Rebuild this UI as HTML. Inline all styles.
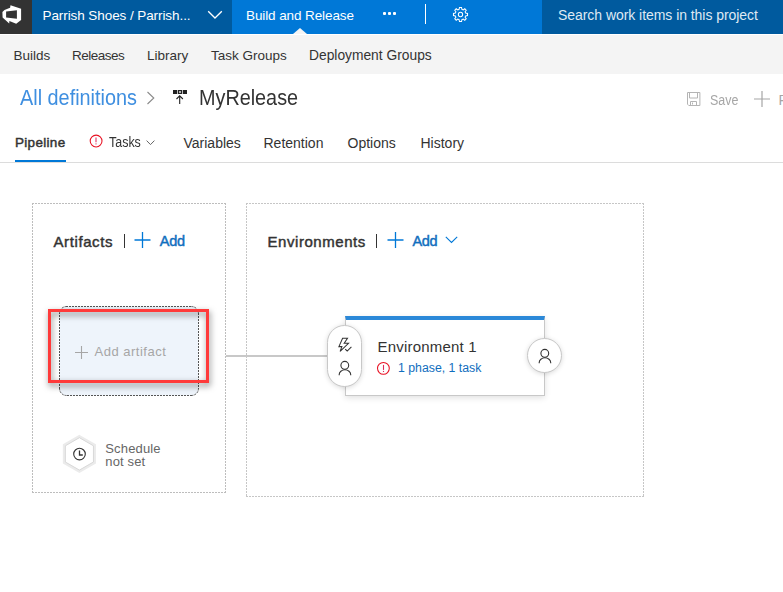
<!DOCTYPE html>
<html><head><meta charset="utf-8">
<style>
*{margin:0;padding:0;box-sizing:border-box}
html,body{width:783px;height:592px;overflow:hidden;background:#fff;font-family:"Liberation Sans",sans-serif;color:#333;position:relative}
.abs{position:absolute;white-space:nowrap;line-height:1}
svg{position:absolute;overflow:visible}
#top{position:absolute;left:0;top:0;width:783px;height:34px;background:#0078d7}
#logo{position:absolute;left:0;top:0;width:32px;height:34px;background:#333}
#proj{position:absolute;left:32px;top:0;width:200px;height:34px;background:#005a9e}
#search{position:absolute;left:542px;top:0;width:241px;height:34px;background:#005a9e}
.wt{color:#fff;font-size:13.5px}
#sub{position:absolute;left:0;top:34px;width:783px;height:40px;background:#f4f4f4;border-top:1px solid #fff}
.sb{font-size:13.5px;color:#333;top:48.5px}
.tab{font-size:14px;color:#333;top:135.7px}
.sm{font-weight:normal !important;-webkit-text-stroke:0.45px currentColor}
</style></head>
<body>
<div id="top"></div>
<div id="logo"></div>
<div id="proj"></div>
<div id="search"></div>
<svg style="left:0;top:0" width="32" height="34" viewBox="0 0 32 34">
  <path fill="#fff" fill-rule="evenodd" d="M10.5 5.3 L21.1 8.8 L21.1 20 L16.2 23.7 L9.4 21 L9.2 23.5 L2.6 17.6 L2.4 11.9 L4.5 9.9 L10.1 7.7 Z M6.1 11.4 L16.9 10.3 L16.9 18.7 L6.1 17.4 Z"/>
</svg>
<div class="abs wt" style="left:42.5px;top:9.1px;letter-spacing:-0.08px">Parrish Shoes / Parrish...</div>
<svg style="left:207px;top:10px" width="16" height="10" viewBox="0 0 16 10"><path d="M1.2 1.2 L8 8 L14.8 1.2" fill="none" stroke="#fff" stroke-width="1.3"/></svg>
<div class="abs wt" style="left:246px;top:9.1px;letter-spacing:-0.1px">Build and Release</div>
<svg style="left:293px;top:28px" width="14" height="6" viewBox="0 0 14 6"><path d="M0 6 L7 0 L14 6 Z" fill="#f4f4f4"/></svg>
<div class="abs" style="left:382.7px;top:12px;width:3px;height:3px;border-radius:1px;background:#fff"></div>
<div class="abs" style="left:387.9px;top:12px;width:3px;height:3px;border-radius:1px;background:#fff"></div>
<div class="abs" style="left:393.1px;top:12px;width:3px;height:3px;border-radius:1px;background:#fff"></div>
<div class="abs" style="left:425px;top:4px;width:1px;height:20px;background:#fff"></div>
<svg style="left:453.4px;top:6.6px" width="15" height="15" viewBox="0 0 16 16">
  <path fill="none" stroke="#fff" stroke-width="1.1" d="M6.9 1 L9.1 1 L9.5 3 L10.9 3.6 L12.6 2.4 L14.1 3.9 L12.9 5.6 L13.5 7 L15.5 7.4 L15.5 9.6 L13.5 10 L12.9 11.4 L14.1 13.1 L12.6 14.6 L10.9 13.4 L9.5 14 L9.1 16 L6.9 16 L6.5 14 L5.1 13.4 L3.4 14.6 L1.9 13.1 L3.1 11.4 L2.5 10 L0.5 9.6 L0.5 7.4 L2.5 7 L3.1 5.6 L1.9 3.9 L3.4 2.4 L5.1 3.6 L6.5 3 Z" transform="translate(0,-0.5)"/>
  <circle cx="8" cy="8" r="2.3" fill="none" stroke="#fff" stroke-width="1.1"/>
</svg>
<div class="abs wt" style="left:558px;top:8px;font-size:14px;color:#dfe9f3;letter-spacing:-0.05px">Search work items in this project</div>

<div id="sub"></div>
<div class="abs sb" style="left:13.5px">Builds</div>
<div class="abs sb" style="left:72px;letter-spacing:-0.5px">Releases</div>
<div class="abs sb" style="left:147px">Library</div>
<div class="abs sb" style="left:211px;letter-spacing:0px">Task Groups</div>
<div class="abs sb" style="left:309px;font-size:13.8px">Deployment Groups</div>

<div class="abs" style="left:20px;top:86.8px;font-size:22px;color:#3f8fe0;letter-spacing:0px;transform-origin:0 0;transform:scaleX(0.902)">All definitions</div>
<svg style="left:146px;top:91px" width="10" height="14" viewBox="0 0 10 14"><path d="M1.5 1 L7.8 7 L1.5 13" fill="none" stroke="#8a8a8a" stroke-width="1.1"/></svg>
<svg style="left:172px;top:89px" width="17" height="16" viewBox="0 0 17 16">
  <rect x="1" y="1" width="4.2" height="4" fill="#222"/>
  <rect x="5.9" y="1" width="4.2" height="4" fill="#222"/>
  <rect x="10.8" y="1" width="4.2" height="4" fill="#222"/>
  <rect x="7.2" y="2.2" width="1.6" height="1.6" fill="#fff"/>
  <path d="M7.7 6.8 L7.7 15 M4.5 10 L7.7 6.8 L10.9 10" fill="none" stroke="#222" stroke-width="1.1"/>
</svg>
<div class="abs" style="left:199px;top:87px;font-size:22px;color:#333;letter-spacing:0px;transform-origin:0 0;transform:scaleX(0.9)">MyRelease</div>

<svg style="left:686px;top:92px" width="15" height="15" viewBox="0 0 15 15">
  <path d="M1.5 0.5 H13.9 V13.5 H2.8 L1.5 12.2 Z" fill="none" stroke="#b4b4b4" stroke-width="1"/>
  <path d="M3.5 0.5 V6 H11.5 V0.5" fill="none" stroke="#b4b4b4" stroke-width="1"/>
  <path d="M4.5 13.5 V9.5 H10.5 V13.5 M6.5 10.5 V12.5" fill="none" stroke="#b4b4b4" stroke-width="1"/>
</svg>
<div class="abs" style="left:709.8px;top:93px;font-size:14px;color:#a6a6a6;transform-origin:0 0;transform:scaleX(0.89)">Save</div>
<svg style="left:754px;top:91px" width="16" height="16" viewBox="0 0 16 16"><path d="M8 0 V16 M0 8 H16" stroke="#a6a6a6" stroke-width="1.2"/></svg>
<div class="abs" style="left:778.5px;top:93px;font-size:14px;color:#a6a6a6">R</div>

<div class="abs tab sm" style="left:15px;font-weight:bold;font-size:13.5px;top:136.3px;letter-spacing:0.3px">Pipeline</div>
<div class="abs" style="left:15px;top:160px;width:51px;height:2px;background:#0078d7"></div>
<svg style="left:89px;top:133.5px" width="14" height="14" viewBox="0 0 14 14"><circle cx="7.1" cy="7" r="5.9" fill="none" stroke="#e81123" stroke-width="1.05"/><path d="M7 3.6 V8.3" stroke="#e02a5a" stroke-width="1.05"/><rect x="6.45" y="9.4" width="1.1" height="1" fill="#e02a5a"/></svg>
<div class="abs tab" style="left:108.5px;top:134.6px;font-size:14px;letter-spacing:0px;transform-origin:0 0;transform:scaleX(0.89)">Tasks</div>
<svg style="left:146px;top:140px" width="9" height="6" viewBox="0 0 9 6"><path d="M0.6 0.6 L4.5 4.6 L8.4 0.6" fill="none" stroke="#666" stroke-width="1"/></svg>
<div class="abs tab" style="left:183.5px">Variables</div>
<div class="abs tab" style="left:263.5px">Retention</div>
<div class="abs tab" style="left:347.5px">Options</div>
<div class="abs tab" style="left:420.5px">History</div>
<div class="abs" style="left:0;top:162px;width:783px;height:1px;background:#dcdcdc"></div>

<!-- panels -->
<div class="abs" style="left:32px;top:203px;width:194px;height:1px;background:repeating-linear-gradient(90deg,#bdbdbd 0 2px,transparent 2px 3px)"></div>
<div class="abs" style="left:32px;top:492px;width:194px;height:1px;background:repeating-linear-gradient(90deg,#bdbdbd 0 2px,transparent 2px 3px)"></div>
<div class="abs" style="left:32px;top:203px;width:1px;height:290px;background:repeating-linear-gradient(180deg,#bdbdbd 0 2px,transparent 2px 3px)"></div>
<div class="abs" style="left:225px;top:203px;width:1px;height:290px;background:repeating-linear-gradient(180deg,#bdbdbd 0 2px,transparent 2px 3px)"></div>
<div class="abs" style="left:246px;top:203px;width:398px;height:1px;background:repeating-linear-gradient(90deg,#c6c6c6 0 2px,transparent 2px 3px)"></div>
<div class="abs" style="left:246px;top:496px;width:398px;height:1px;background:repeating-linear-gradient(90deg,#c6c6c6 0 2px,transparent 2px 3px)"></div>
<div class="abs" style="left:246px;top:203px;width:1px;height:294px;background:repeating-linear-gradient(180deg,#c6c6c6 0 2px,transparent 2px 3px)"></div>
<div class="abs" style="left:643px;top:203px;width:1px;height:294px;background:repeating-linear-gradient(180deg,#c6c6c6 0 2px,transparent 2px 3px)"></div>
<div class="abs" style="left:226px;top:355px;width:102px;height:2px;background:#c8c8c8"></div>


<div class="abs sm" style="left:53.5px;top:234.2px;font-size:15px;color:#333;letter-spacing:0.6px">Artifacts</div>
<div class="abs" style="left:124px;top:234px;width:1px;height:14px;background:#333"></div>
<svg style="left:134px;top:232px" width="17" height="16" viewBox="0 0 17 16"><path d="M8.5 0 V16 M0.5 8 H16.5" stroke="#0078d7" stroke-width="1.3"/></svg>
<div class="abs sm" style="left:159.8px;top:234.2px;font-size:14.5px;color:#106ebe;letter-spacing:-0.3px">Add</div>

<div class="abs sm" style="left:267.5px;top:234.2px;font-size:15px;color:#333;letter-spacing:0.55px">Environments</div>
<div class="abs" style="left:376px;top:234px;width:1px;height:14px;background:#333"></div>
<svg style="left:387px;top:232px" width="17" height="16" viewBox="0 0 17 16"><path d="M8.5 0 V16 M0.5 8 H16.5" stroke="#0078d7" stroke-width="1.3"/></svg>
<div class="abs sm" style="left:412.5px;top:234.2px;font-size:14.5px;color:#106ebe;letter-spacing:-0.35px">Add</div>
<svg style="left:445px;top:236px" width="13" height="8" viewBox="0 0 13 8"><path d="M0.8 0.8 L6.5 6.5 L12.2 0.8" fill="none" stroke="#0078d7" stroke-width="1.1"/></svg>

<!-- artifact box -->
<svg style="left:0;top:0" width="783" height="592">
  <rect x="59.5" y="306.5" width="139" height="89" rx="7" ry="7" fill="#eef4fb"/>
  <g fill="none" stroke="#555" stroke-width="1" stroke-dasharray="2 1">
    <path d="M66 306.5 H192"/>
    <path d="M198.5 313 V389"/>
    <path d="M192 395.5 H66"/>
    <path d="M59.5 389 V313"/>
    <path d="M59.5 313.5 A7 7 0 0 1 66.5 306.5"/>
    <path d="M191.5 306.5 A7 7 0 0 1 198.5 313.5"/>
    <path d="M198.5 388.5 A7 7 0 0 1 191.5 395.5"/>
    <path d="M66.5 395.5 A7 7 0 0 1 59.5 388.5"/>
  </g>
</svg>
<svg style="left:75px;top:346px" width="13" height="13" viewBox="0 0 13 13"><path d="M6.5 0 V13 M0 6.5 H13" stroke="#a6a6a6" stroke-width="1.1"/></svg>
<div class="abs" style="left:94.5px;top:345.4px;font-size:13px;color:#a6a6a6;letter-spacing:0.5px">Add artifact</div>

<!-- red annotation -->
<div class="abs" style="left:48px;top:309px;width:161px;height:74px;border:3px solid #ff3a3a;filter:drop-shadow(1px 3px 3px rgba(0,0,0,0.5))"></div>

<!-- schedule -->
<svg style="left:0;top:0" width="783" height="592">
  <path d="M79.40 436.30 L94.64 445.10 L94.64 462.70 L79.40 471.50 L64.16 462.70 L64.16 445.10 Z" fill="#fff" stroke="#ebebeb" stroke-width="2.6"/>
  <path d="M79.40 437.70 L93.43 445.80 L93.43 462.00 L79.40 470.10 L65.37 462.00 L65.37 445.80 Z" fill="none" stroke="#d6d6d6" stroke-width="0.9"/>
  <circle cx="79.5" cy="454.1" r="5.8" fill="none" stroke="#333" stroke-width="1.1"/>
  <path d="M79.5 450.6 V455 H82.8" fill="none" stroke="#333" stroke-width="1.3"/>
</svg>
<div class="abs" style="left:105.3px;top:441.5px;font-size:13px;color:#666;line-height:13.5px;letter-spacing:0.15px">Schedule<br>not set</div>

<!-- environment card -->
<div class="abs" style="left:345px;top:316px;width:200px;height:80px;background:#fff;border:1px solid #c8c8c8;border-top:4px solid #2b88d8;box-shadow:0 2px 6px rgba(0,0,0,0.12)"></div>
<div class="abs" style="left:327px;top:325px;width:35px;height:62px;border-radius:18px;background:#fff;border:1px solid #c8c8c8;box-shadow:0 1px 5px rgba(0,0,0,0.15)"></div>
<svg style="left:334px;top:334px" width="22" height="22" viewBox="0 0 22 22">
  <path d="M8.6 4.3 H13.5 L10.2 9.3 H14.5 L6.1 17.4 L7.9 12.6 H4.9 Z" fill="none" stroke="#333" stroke-width="1.05" stroke-linejoin="miter"/>
  <path d="M11.2 15.1 L13.2 17 L17.4 12.8" fill="none" stroke="#333" stroke-width="1.05"/>
</svg>
<svg style="left:337px;top:360px" width="16" height="16" viewBox="0 0 16 16">
  <circle cx="7.8" cy="5.3" r="3.9" fill="none" stroke="#333" stroke-width="1.1"/>
  <path d="M2.2 15.2 V14.6 A5.75 4.8 0 0 1 13.7 14.6 V15.2" fill="none" stroke="#333" stroke-width="1.1"/>
</svg>
<div class="abs" style="left:377.5px;top:338.8px;font-size:15px;color:#333;letter-spacing:0.2px">Environment 1</div>
<svg style="left:376px;top:361px" width="15" height="15" viewBox="0 0 15 15"><circle cx="7.4" cy="7.35" r="5.9" fill="none" stroke="#e81123" stroke-width="1.05"/><path d="M7.5 3.9 V8.9" stroke="#e02a5a" stroke-width="1.1"/><rect x="6.95" y="9.9" width="1.1" height="1.1" fill="#e02a5a"/></svg>
<div class="abs" style="left:398px;top:362.2px;font-size:12.3px;color:#106ebe">1 phase, 1 task</div>
<div class="abs" style="left:527px;top:338px;width:35px;height:35px;border-radius:50%;background:#fff;border:1px solid #c8c8c8;box-shadow:0 1px 5px rgba(0,0,0,0.15)"></div>
<svg style="left:537px;top:348px" width="16" height="16" viewBox="0 0 16 16">
  <circle cx="7.8" cy="5.3" r="3.9" fill="none" stroke="#333" stroke-width="1.1"/>
  <path d="M2.2 15.2 V14.6 A5.75 4.8 0 0 1 13.7 14.6 V15.2" fill="none" stroke="#333" stroke-width="1.1"/>
</svg>

</body></html>
